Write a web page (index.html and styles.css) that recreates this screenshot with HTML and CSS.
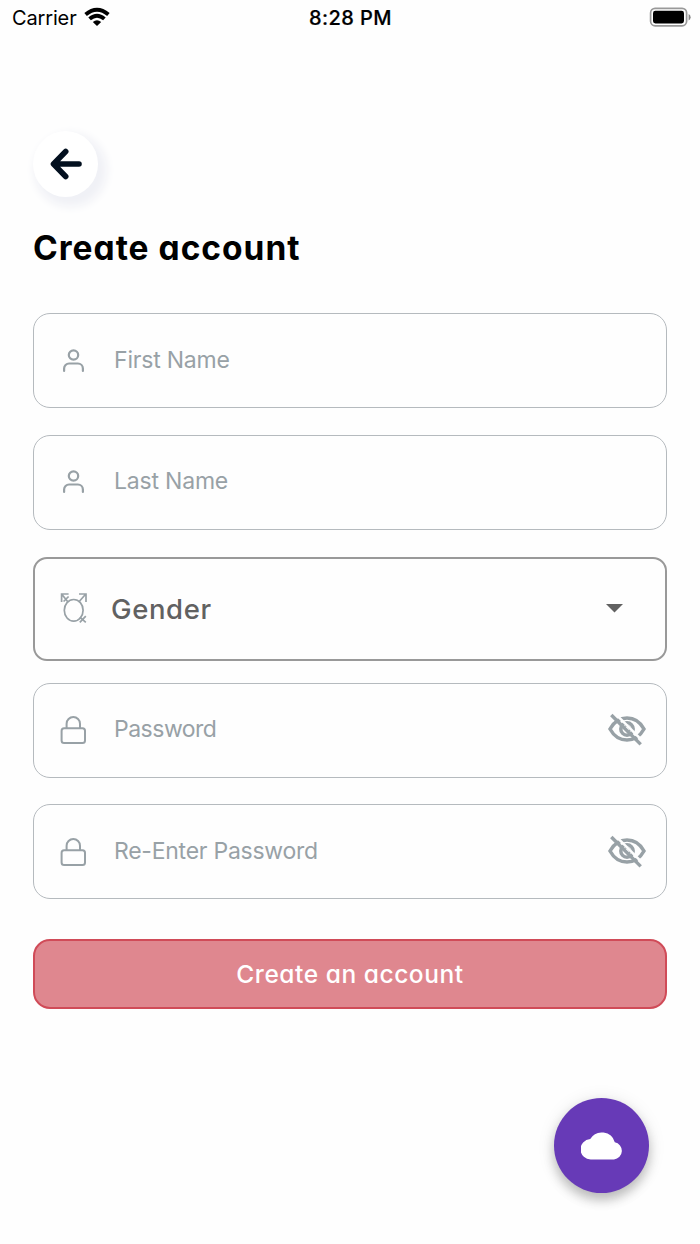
FILE: index.html
```html
<!DOCTYPE html>
<html lang="en">
<head>
<meta charset="utf-8">
<title>Create account</title>
<link rel="stylesheet" href="styles.css">
</head>
<body>
<svg class="defs" width="0" height="0" aria-hidden="true">
  <symbol id="user" viewBox="0 0 24 26"><g fill="none" stroke="currentColor" stroke-width="2.2" stroke-linecap="round"><circle cx="11.5" cy="7" r="4.7"/><path d="M2.1 23v-2.5a5 5 0 0 1 5-5h8.8a5 5 0 0 1 5 5V23"/></g></symbol>
  <symbol id="lock" viewBox="0 0 28 30"><g fill="none" stroke="currentColor" stroke-width="2"><rect x="2.6" y="13.2" width="23.4" height="14.8" rx="2.5"/><path d="M7.6 13.2V8.8a6.7 6.7 0 0 1 13.4 0V13.2"/></g></symbol>
  <symbol id="eye-off" viewBox="0 0 40 34"><g fill="none" stroke="currentColor" stroke-width="3.5"><path d="M4 16Q10 5 21 5T38 16Q32 27 21 27T4 16z"/><circle cx="21" cy="16" r="6.2"/><path d="M19 12.5Q24 12 24.5 18" stroke-width="2.6"/></g><path d="M7.8 -.8L38 29.4" stroke="#fefefe" stroke-width="2.6"/><path d="M5.3 2L34.7 31.4" stroke="currentColor" stroke-width="3.4"/></symbol>
</svg>
<div class="screen">
  <header class="status">
    <div class="status-left"><span class="carrier">Carrier</span>
      <svg class="wifi" width="26" height="20" viewBox="0 0 26 20"><g fill="none" stroke="#000" stroke-width="3.9"><path d="M1.6 7.5Q13-2.1 24.4 7.5"/><path d="M5.6 11.9Q13 5.5 20.4 11.9"/></g><path d="M8.8 15Q13 11.4 17.2 15L13 19z"/></svg>
    </div>
    <time class="clock">8:28 PM</time>
    <svg class="battery" width="42" height="20" viewBox="0 0 42 20"><rect x="1.6" y="1.4" width="36" height="17.4" rx="4.5" fill="#fff" stroke="#999" stroke-width="1.7"/><rect x="4" y="3.8" width="31" height="12.7" rx="2.4"/><path d="M39.6 7q2 1 2 3.2t-2 3.2z" fill="#888"/></svg>
  </header>
  <main class="content">
    <button class="back" aria-label="Back"><svg width="32" height="32" viewBox="0 0 32 32"><path d="M15.7 3.5L3.5 16l12.2 12.5M4 16h25" fill="none" stroke="#03101f" stroke-width="5.6" stroke-linecap="round" stroke-linejoin="round"/></svg></button>
    <h1 class="title">Create account</h1>
    <form class="form">
      <div class="field"><svg class="user"><use href="#user"/></svg><span class="placeholder first">First Name</span></div>
      <div class="field"><svg class="user"><use href="#user"/></svg><span class="placeholder last">Last Name</span></div>
      <div class="field select">
        <svg class="gender" width="27" height="31" viewBox="0 0 27 31"><g fill="none" stroke="currentColor" stroke-width="1.7"><ellipse cx="13.7" cy="17.3" rx="9.4" ry="10.8"/><path d="M1.6 9V1h7M1.6 1l6.2 7.7M3.6 8.5l5-5M19 8.8L25.8 1M19 1h7v8M19.8 24.2l6 5.2M25.8 23.2l-6 6.2"/></g></svg>
        <span class="select-label">Gender</span>
        <svg class="caret" width="17" height="9" viewBox="0 0 17 9"><path d="M0 0h17L8.5 8.5z" fill="#616161"/></svg>
      </div>
      <div class="field"><svg class="lock"><use href="#lock"/></svg><span class="placeholder pass">Password</span><svg class="eye"><use href="#eye-off"/></svg></div>
      <div class="field"><svg class="lock"><use href="#lock"/></svg><span class="placeholder repass">Re-Enter Password</span><svg class="eye"><use href="#eye-off"/></svg></div>
      <button type="button" class="submit">Create an account</button>
    </form>
  </main>
  <footer class="footer"><button class="fab" aria-label="Cloud"><svg width="42" height="28" viewBox="0 0 42 28"><path d="M10.2 27.5A9.9 9.9 0 0 1 9.2 7.1 13.5 13.5 0 0 1 33.8 10.3 8.7 8.7 0 0 1 33 27.5z" fill="#fff"/></svg></button></footer>
</div>
</body>
</html>
```
FILE: styles.css
```css
* { box-sizing: border-box; }
body { margin: 0; background: #fefefe; font-family: Inter, "Liberation Sans", sans-serif; }
button { font: inherit; padding: 0; border: 0; }
svg { display: block; flex: none; }
.defs { display: none; }
.screen { height: 1244px; overflow: hidden; display: flex; flex-direction: column; }
.status { height: 36px; display: grid; grid-template-columns: 1fr auto 1fr; align-items: center; padding: 0 9px 0 12px; color: #000; }
.status-left { display: flex; align-items: center; gap: 7px; }
.carrier { font-size: 20px; letter-spacing: -.15px; }
.wifi { margin-top: -3px; }
.clock { font-size: 20px; font-weight: 500; letter-spacing: .45px; margin-right: 2px; -webkit-text-stroke: .2px #000; }
.battery { justify-self: end; margin-top: -2px; }
.content { padding: 95px 33px 0; }
.back { width: 65px; height: 66px; border-radius: 50%; display: grid; place-items: center; background: #fff; box-shadow: 5px 6px 10px 4px #f0f1f6; }
.title { margin: 30px 0 0; height: 43px; line-height: 42px; font-size: 33.5px; font-weight: 700; letter-spacing: 1px; white-space: nowrap; color: #000; font-feature-settings: "cv11"; }
.form { padding-top: 43px; display: flex; flex-direction: column; }
.field { height: 95px; margin-bottom: 26.6px; border: 1px solid #b5babe; border-radius: 17px; display: flex; align-items: center; color: #98a1a6; padding: 0 20px 0 28px; background: #fefefe; }
.user { width: 24px; height: 26px; }
.placeholder { font-size: 23px; line-height: 30px; margin-left: 28px; margin-top: -2px; white-space: nowrap; }
.first, .last { letter-spacing: -.2px; }
.pass { letter-spacing: -.5px; }
.repass { letter-spacing: -.25px; }
.lock { width: 28px; height: 30px; margin-left: -3px; }
.lock + .placeholder { margin-left: 27px; }
.eye { width: 40px; height: 34px; margin-left: auto; }
.select { height: 104.5px; margin: .5px 0 21.5px; border: 2px solid #999; border-radius: 14px; padding: 0 42px 0 25px; }
.select-label { margin-left: 24px; color: #616161; font-size: 27.5px; font-weight: 500; letter-spacing: .6px; }
.caret { margin-left: auto; }
.submit { height: 69.5px; margin-top: 13.5px; border: 2px solid #d04b58; border-radius: 17px; background: #df878f; color: #fff; font-size: 24.5px; line-height: 30px; padding-bottom: 1px; font-weight: 500; letter-spacing: .55px; font-feature-settings: "cv11"; }
.footer { margin-top: auto; padding: 0 51px 51px 0; display: flex; justify-content: flex-end; }
.fab { width: 95px; height: 95px; border-radius: 50%; background: #673ab7; display: grid; place-items: center; box-shadow: 0 7px 11px rgba(0,0,0,.22), 0 2px 18px rgba(0,0,0,.1); }
```
